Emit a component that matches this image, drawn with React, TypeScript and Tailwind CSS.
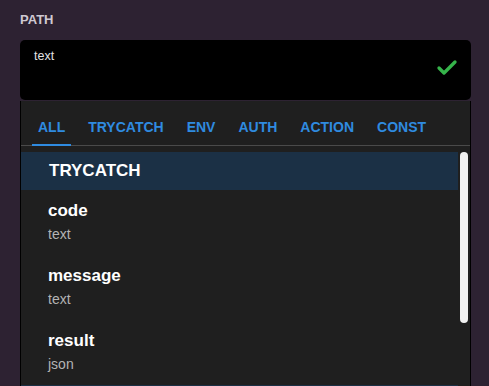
import React from 'react';
import { Check } from 'lucide-react';

const TABS = ['ALL', 'TRYCATCH', 'ENV', 'AUTH', 'ACTION', 'CONST'];

const ITEMS = [
  { name: 'code', type: 'text' },
  { name: 'message', type: 'text' },
  { name: 'result', type: 'json' },
];

export default function App() {
  return (
    <div
      className="w-full h-[386px] overflow-hidden bg-[#2d2232] px-5 pt-[12px]"
      style={{ fontFamily: '"Liberation Sans", Arial, sans-serif' }}
    >
      {/* Label */}
      <div className="text-[13px] font-bold leading-[16px] text-[#cfc9d2]">PATH</div>

      {/* Input */}
      <div className="mt-[12px] w-[451px] h-[60px] bg-black rounded-[5px] flex justify-between pl-[14px] pr-[12px] pt-[8px]">
        <span className="text-[12.5px] leading-[16px] text-[#e2e2e2]">text</span>
        <Check size={24} strokeWidth={3.3} className="text-[#36b44b] mt-[8px]" />
      </div>

      {/* Dropdown */}
      <div className="w-[451px] h-[290px] bg-[#1f1f1f] border border-black border-t-0 mt-px overflow-hidden flex flex-col">
        {/* Tabs */}
        <div className="flex gap-[11px] pl-[11px] border-b border-[#4a4a4a] pt-[18px] shrink-0">
          {TABS.map((tab, i) => (
            <div
              key={tab}
              className={`px-[6px] pb-[8px] text-[14px] font-bold leading-[17px] text-[#2f8be0] -mb-px border-b-2 ${i === 0 ? 'border-[#2f8be0]' : 'border-transparent'}`}
            >
              {tab}
            </div>
          ))}
        </div>

        {/* List */}
        <div className="flex pt-[6px]">
          <div className="w-[437px]">
            <div className="h-[38px] bg-[#1b3045] flex items-center pl-[28px] text-[17px] font-bold text-white">
              TRYCATCH
            </div>
            {ITEMS.map((item) => (
              <div key={item.name} className="h-[65px] pl-[27px] pt-[11px]">
                <div className="text-[17px] leading-[20px] font-bold text-white">{item.name}</div>
                <div className="mt-[5px] text-[14px] leading-[17px] text-[#b4b4b4]">{item.type}</div>
              </div>
            ))}
            <div className="h-[38px] bg-[#1b3045]" />
          </div>
          <div className="flex-1 flex justify-center">
            <div className="w-[8px] h-[171px] bg-[#f2f2f2] rounded-full" />
          </div>
        </div>
      </div>
    </div>
  );
}
